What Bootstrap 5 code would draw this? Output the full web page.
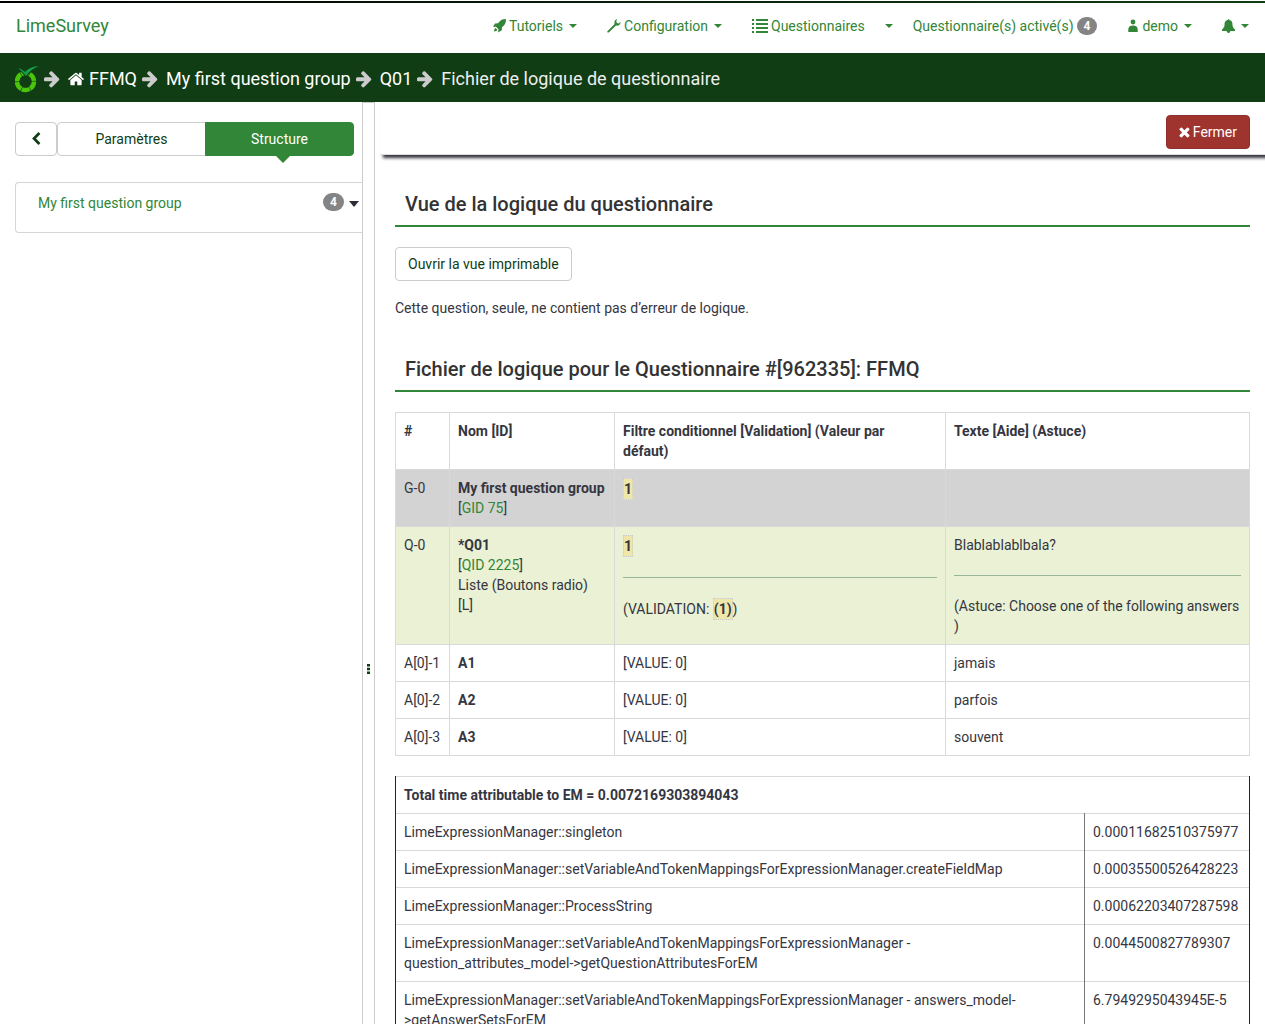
<!DOCTYPE html>
<html lang="fr">
<head>
<meta charset="utf-8">
<meta name="viewport" content="width=device-width, initial-scale=1">
<title>LimeSurvey</title>
<link href="https://cdn.jsdelivr.net/npm/bootstrap@5.3.0/dist/css/bootstrap.min.css" rel="stylesheet">
<style>
:root{--lime:#328637;--forest:#103d14;--ink:#35363f;--line:#d9d9d9}
body{font-family:Roboto,"Liberation Sans",sans-serif;font-size:14px;line-height:20px;color:var(--ink)}
a{color:var(--lime);text-decoration:none}
svg{fill:currentColor;flex:none}
.topnav{height:53px;padding:0 16px 2px}
.topnav::before{content:"";position:absolute;inset:1px 0 auto 0;height:2px;background:linear-gradient(90deg,#000,#103d14)}
.topnav .navbar-brand{font-size:18px;line-height:20px;color:var(--lime)}
.topnav .nav-link{color:var(--lime);padding:0;display:flex;align-items:center;gap:3px}
.drop{display:inline-block;border:4px solid transparent;border-top-color:currentColor;border-bottom:0;margin-left:3px}
.links-main{gap:30px}
.links-survey{gap:20px}
.topnav .badge,.side-group .badge{font-size:12px;line-height:12px;font-weight:700;padding:3px 7px;border-radius:10px;background:#848484}
.crumbs{height:49px;background:var(--forest);padding:2px 15px 0;font-size:18px;line-height:24px;color:#ccc;gap:5px}
.crumbs a,.crumbs .here{color:#fff}
.crumbs .here{color:#eee}
.crumbs .home-link{gap:5px}
.crumbs .step{margin-right:3px}
.sidebar{width:362px;padding:20px 0 0 15px}
.btn{font-size:14px;line-height:20px;padding:6px 12px;border-radius:4px}
.btn-plain{--bs-btn-color:var(--forest);--bs-btn-bg:#fff;--bs-btn-border-color:#ccc;--bs-btn-hover-bg:#eee;--bs-btn-hover-color:var(--forest)}
.btn-lime{--bs-btn-color:#fff;--bs-btn-bg:var(--lime);--bs-btn-border-color:var(--lime);--bs-btn-hover-bg:#286b2c;--bs-btn-hover-color:#fff}
.btn-close-page{--bs-btn-color:#fff;--bs-btn-bg:#9f342f;--bs-btn-border-color:#8c2e2a;--bs-btn-hover-bg:#842b27;--bs-btn-hover-color:#fff;gap:3px}
.tabs-row{margin-right:8px}
.tabs-row .back{width:42px}
.tab-on::after{content:"";position:absolute;top:100%;left:47%;border:8px solid transparent;border-top-color:var(--lime);border-bottom:0}
.side-group{margin-top:26px;height:51px;border:1px solid #d6d6d6;border-right:0;border-radius:4px 0 0 4px;padding:10px 3px 0 22px}
.side-group .drop{border-width:6px 5px 0;margin-left:5px;color:#2d2d3a}
.splitter{width:13px;border:1px solid #ccc;border-bottom:0;color:var(--forest);padding-top:210px}
.toolbar{height:53px;margin-left:5px;padding-right:15px;border-bottom:1px solid #ddd;box-shadow:3px 3px 3px var(--ink)}
.content{padding:29px 15px 0 20px}
.section-title{font-size:20px;line-height:22px;font-weight:500;color:#333;padding:9px 10px 10px;border-bottom:2px solid var(--lime);margin:0 0 20px}
.verdict{margin:17px 0 24px}
.table{color:var(--ink);margin-bottom:20px;border-color:var(--line)}
.table>:not(caption)>*>*{padding:8px;background:transparent}
.table hr{margin:20px 0;border-top:1px solid #98b798;opacity:1}
.row-group{background:#d3d3d3}
.row-question{background:#eaf1d4}
.c-num{width:54px}.c-name{width:165px}.c-filter{width:331px}.c-time{width:165px}
.expr{display:inline-block;border:1px dotted #ccc;background:#efe6aa;font-weight:700}
.timing th,.timing td{border-color:var(--line) #222}
.timing td:first-child{border-right-color:#777}
.timing td:last-child{border-left-color:#777}
</style>
<script src="https://cdn.jsdelivr.net/npm/bootstrap@5.3.0/dist/js/bootstrap.bundle.min.js"></script>
</head>
<body class="vh-100 d-flex flex-column overflow-hidden">
<svg class="d-none" aria-hidden="true">
<symbol id="arrow" viewBox="128 64 1536 1728"><path d="M1600 960q0 54-37 91l-651 651q-39 37-91 37-51 0-90-37l-75-75q-38-38-38-91t38-91l293-293h-704q-52 0-84.500-37.500t-32.500-90.500v-128q0-53 32.500-90.500t84.500-37.500h704l-293-294q-38-36-38-90t38-90l75-75q38-38 90-38 53 0 91 38l651 651q37 35 37 90z"/></symbol>
</svg>
<nav class="topnav navbar navbar-expand position-relative flex-shrink-0">
  <a class="navbar-brand m-0 p-0" href="#">LimeSurvey</a>
  <div class="links-main d-flex align-items-center ms-auto">
    <a class="nav-link" href="#"><svg width="13" height="14" viewBox="0 0 13 14"><path d="M13 0C9 0 7 1.500 5 4.200L2 4.500 0 8l3-.3L5.500 10.200 5 13.500l3.800-2.200.2-3C12 6 13 4 13 0zM2.500 9C1.500 9.500 1 11 1 12.500 2.500 12.500 4 12 4.300 10.800z"/></svg>Tutoriels <span class="drop"></span></a>
    <a class="nav-link" href="#"><svg width="14" height="14" viewBox="0 0 14 14"><path d="M10.200 0 9.300 2 9.800 4.100 12 4.500 13.500 3C13.800 5.500 11.500 7.200 9 6.500L2 13.200Q1.400 13.900.6 13.400T.7 11.900L7.600 5C7 2.500 8 .3 10.200 0z"/></svg>Configuration <span class="drop"></span></a>
    <div class="links-survey d-flex align-items-center">
      <a class="nav-link" href="#"><svg width="16" height="14" viewBox="0 0 16 14"><path d="M0 0h2v2H0zm4 0h12v2H4zM0 4h2v2H0zm4 0h12v2H4zM0 8h2v2H0zm4 0h12v2H4zM0 12h2v2H0zm4 0h12v2H4z"/></svg>Questionnaires</a>
      <a class="nav-link" href="#" aria-label="Menu questionnaires"><span class="drop m-0"></span></a>
      <a class="nav-link" href="#">Questionnaire(s) activé(s) <span class="badge">4</span></a>
    </div>
    <a class="nav-link" href="#"><svg width="12" height="14" viewBox="0 0 12 14"><circle cx="6" cy="3" r="2.400"/><path d="M1.300 13V10.500C1.300 8 3 6.600 6 6.600s4.700 1.400 4.700 3.900V13z"/></svg>demo <span class="drop"></span></a>
    <a class="nav-link" href="#" aria-label="Notifications"><svg width="13" height="14" viewBox="0 0 13 14"><path d="M6.500 0 7.500 1C10 1.500 10.500 3.500 10.500 6S12 9.500 13 10.500V12H8.500Q8 14 6.500 14T4.500 12H0V10.500C1 9.500 2.500 8.500 2.500 6S3 1.500 5.500 1z"/></svg><span class="drop"></span></a>
  </div>
</nav>
<nav class="crumbs d-flex align-items-center flex-shrink-0" aria-label="Fil d'Ariane">
  <a href="#" class="d-flex" aria-label="Accueil"><svg width="24" height="28" viewBox="0 0 24 28"><circle cx="10.500" cy="16.500" r="8.500" fill="none" stroke="#4bc50b" stroke-width="4.400" stroke-dasharray="8.300 .6" pathLength="53.400"/><path d="M4 4Q7 5 10 7.500 15 1.500 24 1 16 4 11 11 8 7 4 4z" fill="#14a04b" stroke="#103d14" stroke-width="2"/><path d="M3 3Q7 4 10 7 15 1.500 24 1 16 4 11 11 8 7 3 3z" fill="#14a04b"/></svg></a>
  <svg class="step" width="16" height="18"><use href="#arrow"/></svg>
  <a href="#" class="home-link d-flex align-items-center"><svg width="16" height="16" viewBox="80 80 1632 1632"><path d="M1472 992v480q0 26-19 45t-45 19h-384v-384h-256v384h-384q-26 0-45-19t-19-45v-480q0-1 .5-3t.5-3l575-474 575 474q1 2 1 6zm223-69l-62 74q-8 9-21 11h-3q-13 0-21-7l-692-577-692 577q-12 8-24 7-13-2-21-11l-62-74q-8-10-7-23.500t11-21.500l719-599q32-26 76-26t76 26l244 204v-195q0-14 9-23t23-9h192q14 0 23 9t9 23v408l219 182q10 8 11 21.500t-7 23.500z"/></svg>FFMQ</a>
  <svg class="step" width="16" height="18"><use href="#arrow"/></svg>
  <a href="#">My first question group</a>
  <svg class="step" width="16" height="18"><use href="#arrow"/></svg>
  <a href="#">Q01</a>
  <svg class="step" width="16" height="18"><use href="#arrow"/></svg>
  <span class="here">Fichier de logique de questionnaire</span>
</nav>
<div class="d-flex flex-grow-1 overflow-hidden">
  <aside class="sidebar flex-shrink-0">
    <div class="tabs-row d-flex">
      <button class="btn btn-plain back d-flex align-items-center justify-content-center" type="button" aria-label="Réduire"><svg width="14" height="14" viewBox="0 0 1792 1792"><path d="M1427 301l-531 531 531 531q19 19 19 45t-19 45l-166 166q-19 19-45 19t-45-19l-742-742q-19-19-19-45t19-45l742-742q19-19 45-19t45 19l166 166q19 19 19 45t-19 45z"/></svg></button>
      <div class="btn-group flex-grow-1">
        <button class="btn btn-plain w-50" type="button">Paramètres</button>
        <button class="btn btn-lime tab-on w-50" type="button">Structure</button>
      </div>
    </div>
    <div class="side-group d-flex align-items-start">
      <a href="#" class="me-auto">My first question group</a>
      <span class="badge">4</span><span class="drop mt-2"></span>
    </div>
  </aside>
  <div class="splitter d-flex align-items-center justify-content-center flex-shrink-0"><svg width="3" height="10" viewBox="0 0 3 10"><path d="M0 0h3v2.500H0zm0 3.700h3v2.500H0zm0 3.800h3V10H0z"/></svg></div>
  <main class="flex-grow-1 overflow-hidden">
    <div class="toolbar d-flex align-items-center justify-content-end">
      <button class="btn btn-close-page d-flex align-items-center mt-2" type="button"><svg width="11" height="14" viewBox="250 200 1300 1400"><path d="M1490 1322q0 40-28 68l-136 136q-28 28-68 28t-68-28l-294-294-294 294q-28 28-68 28t-68-28l-136-136q-28-28-28-68t28-68l294-294-294-294q-28-28-28-68t28-68l136-136q28-28 68-28t68 28l294 294 294-294q28-28 68-28t68 28l136 136q28 28 28 68t-28 68l-294 294 294 294q28 28 28 68z"/></svg>Fermer</button>
    </div>
    <div class="content">
      <h1 class="section-title">Vue de la logique du questionnaire</h1>
      <button class="btn btn-plain" type="button">Ouvrir la vue imprimable</button>
      <p class="verdict">Cette question, seule, ne contient pas d’erreur de logique.</p>
      <h2 class="section-title pt-3">Fichier de logique pour le Questionnaire #[962335]: FFMQ</h2>
      <table class="table table-bordered">
        <thead><tr class="align-top"><th class="c-num">#</th><th class="c-name">Nom [ID]</th><th class="c-filter">Filtre conditionnel [Validation] (Valeur par<br>défaut)</th><th>Texte [Aide] (Astuce)</th></tr></thead>
        <tbody>
          <tr class="row-group"><td>G-0</td><td><b>My first question group</b><br>[<a href="#">GID 75</a>]</td><td><span class="expr">1</span></td><td></td></tr>
          <tr class="row-question"><td>Q-0</td><td><b>*Q01</b><br>[<a href="#">QID 2225</a>]<br>Liste (Boutons radio) [L]</td><td><span class="expr">1</span><hr>(VALIDATION: <span class="expr">(1)</span>)</td><td>Blablablablbala?<hr>(Astuce: Choose one of the following answers<br>)</td></tr>
          <tr><td>A[0]-1</td><td><b>A1</b></td><td>[VALUE: 0]</td><td>jamais</td></tr>
          <tr><td>A[0]-2</td><td><b>A2</b></td><td>[VALUE: 0]</td><td>parfois</td></tr>
          <tr><td>A[0]-3</td><td><b>A3</b></td><td>[VALUE: 0]</td><td>souvent</td></tr>
        </tbody>
      </table>
      <table class="table table-bordered timing">
        <thead><tr><th colspan="2">Total time attributable to EM = 0.0072169303894043</th></tr></thead>
        <tbody>
          <tr><td>LimeExpressionManager::singleton</td><td class="c-time">0.00011682510375977</td></tr>
          <tr><td>LimeExpressionManager::setVariableAndTokenMappingsForExpressionManager.createFieldMap</td><td>0.00035500526428223</td></tr>
          <tr><td>LimeExpressionManager::ProcessString</td><td>0.00062203407287598</td></tr>
          <tr><td>LimeExpressionManager::setVariableAndTokenMappingsForExpressionManager - question_attributes_model-&gt;getQuestionAttributesForEM</td><td>0.0044500827789307</td></tr>
          <tr><td>LimeExpressionManager::setVariableAndTokenMappingsForExpressionManager - answers_model-&gt;getAnswerSetsForEM</td><td>6.7949295043945E-5</td></tr>
        </tbody>
      </table>
    </div>
  </main>
</div>
</body>
</html>
